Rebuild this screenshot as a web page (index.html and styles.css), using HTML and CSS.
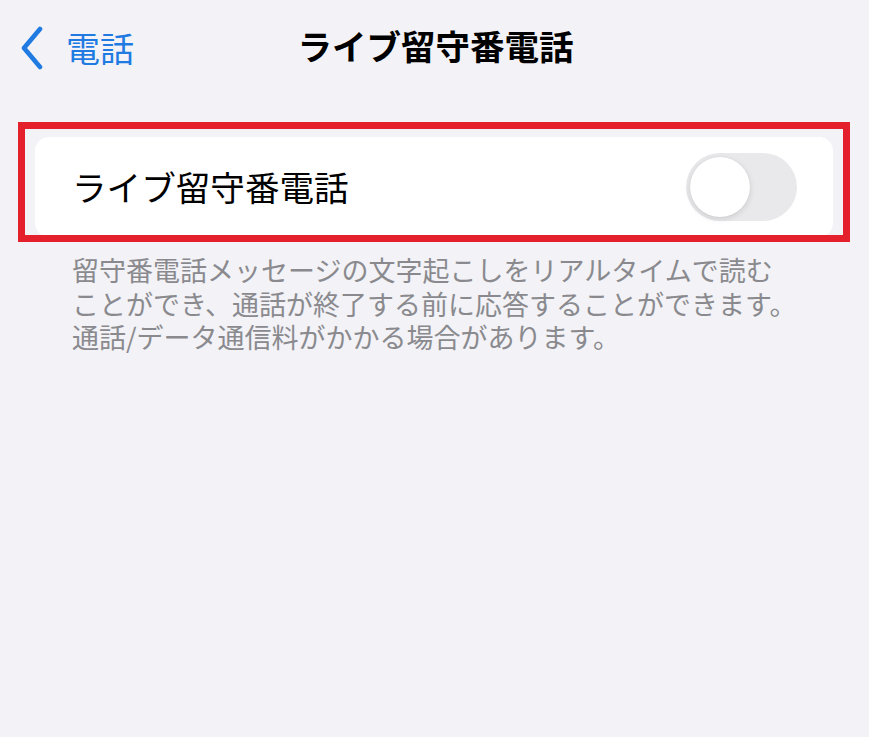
FILE: index.html
```html
<!DOCTYPE html>
<html lang="ja">
<head>
<meta charset="utf-8">
<title>ライブ留守番電話</title>
<link rel="stylesheet" href="styles.css">
</head>
<body>
<header class="nav">
  <a class="back" href="#">
    <svg class="chevron" width="24" height="44" viewBox="0 0 24 44" aria-hidden="true">
      <path d="M20 3 L4 22 L20 41" fill="none" stroke="currentColor" stroke-width="4.6" stroke-linecap="round" stroke-linejoin="round"/>
    </svg>
    <span class="back-label">電話</span>
  </a>
  <h1 class="title">ライブ留守番電話</h1>
</header>
<main class="content">
  <div class="group">
    <div class="card">
      <span class="row-label">ライブ留守番電話</span>
      <span class="toggle"><span class="knob"></span></span>
    </div>
    <div class="highlight"></div>
  </div>
  <p class="footer">留守番電話メッセージの文字起こしをリアルタイムで読む<br>ことができ、通話が終了する前に応答することができます。<br>通話/データ通信料がかかる場合があります。</p>
</main>
</body>
</html>
```
FILE: styles.css
```css
html, body {
  margin: 0;
  padding: 0;
}
body {
  background: #f2f2f7;
  font-family: "Noto Sans CJK JP", "Noto Sans", sans-serif;
  width: 869px;
  height: 737px;
  overflow: hidden;
}
.nav {
  position: relative;
  height: 96px;
  display: flex;
  align-items: center;
  justify-content: center;
}
.back {
  position: absolute;
  left: 20px;
  top: 26px;
  display: flex;
  align-items: center;
  gap: 22px;
  color: #1f7be2;
  text-decoration: none;
}
.chevron {
  display: block;
}
.back-label {
  font-size: 34px;
  line-height: 44px;
  font-weight: 400;
}
.title {
  margin: 0;
  margin-top: -6px;
  margin-left: 2px;
  font-size: 34.5px;
  font-weight: 700;
  color: #000;
  line-height: 44px;
}
.content {
  padding: 41px 36px 0 35px;
}
.group {
  position: relative;
}
.card {
  background: #fff;
  border-radius: 14px;
  height: 100px;
  display: flex;
  align-items: center;
  justify-content: space-between;
  padding: 0 36px 0 37px;
}
.row-label {
  font-size: 34.6px;
  color: #000;
  line-height: 44px;
  margin-top: -2px;
}
.toggle {
  width: 111px;
  height: 68px;
  border-radius: 34px;
  background: #e9e9eb;
  display: flex;
  align-items: center;
  padding-left: 4px;
  box-sizing: border-box;
}
.knob {
  width: 60px;
  height: 60px;
  border-radius: 50%;
  background: #fff;
  box-shadow: 0 2px 6px rgba(0,0,0,0.12), 0 0 1px rgba(0,0,0,0.1);
}
.highlight {
  position: absolute;
  left: -17px;
  top: -15px;
  width: 832px;
  height: 120px;
  box-sizing: border-box;
  border: 7px solid #e3202b;
  pointer-events: none;
}
.footer {
  margin: 16px 0 0 37px;
  font-size: 27px;
  line-height: 33.5px;
  color: #8a8a8e;
  letter-spacing: 0;
}
```
